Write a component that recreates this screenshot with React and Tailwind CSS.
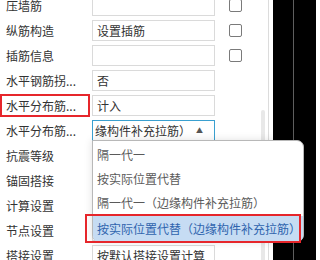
import React from 'react';

const rows = [
  { label: '压墙筋', value: '', check: true },
  { label: '纵筋构造', value: '设置插筋', check: true },
  { label: '插筋信息', value: '', check: true },
  { label: '水平钢筋拐...', value: '否' },
  { label: '水平分布筋...', value: '计入', marked: true },
  { label: '水平分布筋...', value: '缘构件补充拉筋）', select: true },
  { label: '抗震等级', value: '' },
  { label: '锚固搭接', value: '' },
  { label: '计算设置', value: '' },
  { label: '节点设置', value: '' },
  { label: '搭接设置', value: '按默认搭接设置计算' },
];

const options = ['隔一代一', '按实际位置代替', '隔一代一（边缘构件补充拉筋）', '按实际位置代替（边缘构件补充拉筋）'];

const App = () => {
  return (
    <div
      className="relative w-[316px] h-[260px] overflow-hidden bg-black flex"
      style={{ fontFamily: '"Noto Sans CJK SC", "Noto Sans", sans-serif' }}
    >
      {/* property panel */}
      <div className="w-[273px] h-full bg-white flex">
        <div className="w-[269px] h-full border-r border-[#dcdcdc]">
          <div className="mt-[-7px]">
            {rows.map((row, i) => (
              <div key={i} className="relative h-[25px] flex items-center text-[12px] text-[#333]">
                <div className="w-[92px] pl-[6px] whitespace-nowrap">{row.label}</div>
                {row.select ? (
                  <div className="w-[123px] h-[21px] border border-[#3aa0d0] pl-[2px] flex items-center justify-between pr-[11px]">
                    <span className="whitespace-nowrap">{row.value}</span>
                    <span className="text-[7px] text-[#555] leading-none">▲</span>
                  </div>
                ) : (
                  <div className="w-[123px] h-[21px] border border-[#dadada] pl-[4px] flex items-center whitespace-nowrap">
                    {row.value}
                  </div>
                )}
                {row.check && (
                  <div className="ml-[14px] w-[13px] h-[13px] rounded-[2px] border border-[#7a7a7a]" />
                )}
                {row.marked && (
                  <div className="absolute left-0 top-[1px] w-[90px] h-[23px] border-2 border-[#e6262b]" />
                )}
              </div>
            ))}
          </div>
        </div>
      </div>

      {/* dark side area */}
      <div className="flex-1 h-full flex">
        <div className="w-[20px]" />
        <div className="w-[1px] h-full bg-[#5e5e5e]" />
      </div>

      {/* scrollbar thumb */}
      <div className="absolute left-[261px] top-[110px] w-[4px] h-[170px] rounded-full bg-[#e8e8e8]" />

      {/* dropdown list */}
      <div className="absolute left-[92px] top-[140px] w-[212px] h-[102px] bg-white border border-[#b8b8b8] rounded-tr-[7px] rounded-b-[7px] shadow-[0_0_8px_rgba(0,0,0,0.12)] pt-[2px] text-[12px]">
        {options.map((opt, i) =>
          i === options.length - 1 ? (
            <div key={i} className="h-[26px] mt-[1px] pl-[4px] flex items-center bg-[#c6dcf3] text-[#2f64ae] rounded-b-[6px] whitespace-nowrap">
              {opt}
            </div>
          ) : (
            <div key={i} className="h-[24px] pl-[4px] flex items-center text-[#5a5a5a] whitespace-nowrap">
              {opt}
            </div>
          )
        )}
      </div>

      {/* highlight marker on selected option */}
      <div className="absolute left-[85px] top-[214px] w-[216px] h-[29px] border-2 border-[#e6262b]" />
    </div>
  );
};

export default App;
